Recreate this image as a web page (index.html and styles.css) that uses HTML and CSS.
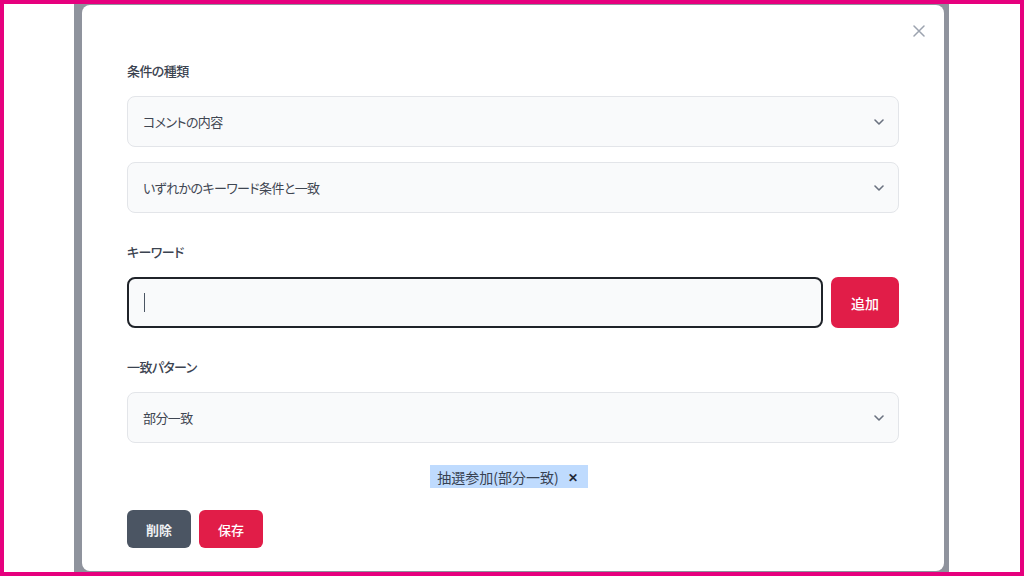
FILE: index.html
```html
<!DOCTYPE html>
<html lang="ja">
<head>
<meta charset="utf-8">
<title>条件の編集</title>
<link rel="stylesheet" href="styles.css">
</head>
<body>
<div class="frame">
  <div class="side"></div>
  <div class="backdrop">
    <div class="modal">
      <button class="close" aria-label="閉じる">
        <svg width="12" height="12" viewBox="0 0 12 12"><path d="M1 1L11 11M11 1L1 11" fill="none" stroke="#9ca3af" stroke-width="1.5" stroke-linecap="round"/></svg>
      </button>

      <div class="group">
        <div class="label">条件の種類</div>
        <div class="select">
          <span>コメントの内容</span>
          <svg class="chev" width="10" height="6" viewBox="0 0 10 6"><path d="M1 1L5 5L9 1" fill="none" stroke="#6b7280" stroke-width="1.6" stroke-linecap="round" stroke-linejoin="round"/></svg>
        </div>
        <div class="select second">
          <span>いずれかのキーワード条件と一致</span>
          <svg class="chev" width="10" height="6" viewBox="0 0 10 6"><path d="M1 1L5 5L9 1" fill="none" stroke="#6b7280" stroke-width="1.6" stroke-linecap="round" stroke-linejoin="round"/></svg>
        </div>
      </div>

      <div class="group">
        <div class="label">キーワード</div>
        <div class="input-row">
          <div class="input"><span class="caret"></span></div>
          <button class="btn btn-primary btn-add">追加</button>
        </div>
      </div>

      <div class="group">
        <div class="label">一致パターン</div>
        <div class="select">
          <span>部分一致</span>
          <svg class="chev" width="10" height="6" viewBox="0 0 10 6"><path d="M1 1L5 5L9 1" fill="none" stroke="#6b7280" stroke-width="1.6" stroke-linecap="round" stroke-linejoin="round"/></svg>
        </div>
      </div>

      <div class="tags">
        <span class="tag">抽選参加(部分一致)<span class="tag-x">✕</span></span>
      </div>

      <div class="actions">
        <button class="btn btn-dark">削除</button>
        <button class="btn btn-primary">保存</button>
      </div>
    </div>
  </div>
  <div class="side"></div>
</div>
</body>
</html>
```

FILE: styles.css
```css
* { box-sizing: border-box; }
html, body { margin: 0; padding: 0; background: #fff; }
body {
  font-family: "Noto Sans CJK JP", "Noto Sans", sans-serif;
  font-feature-settings: "palt";
  color: #374151;
}
.frame {
  width: 1024px;
  height: 576px;
  border: 4px solid #e6007e;
  display: flex;
  background: #fff;
  overflow: hidden;
}
.side { width: 70px; flex: none; background: #fff; }
.backdrop {
  width: 875px;
  flex: none;
  background: #8f939d;
  padding: 1px 5px 1px 8px;
  display: flex;
}
.modal {
  position: relative;
  flex: 1;
  background: #fff;
  border-radius: 8px;
  padding: 56px 45px 0;
}
.close {
  position: absolute;
  top: 20px;
  right: 19px;
  width: 12px;
  height: 12px;
  padding: 0;
  border: 0;
  background: none;
  display: flex;
}
.group { margin-bottom: 29px; }
.label {
  font-size: 13px;
  line-height: 20px;
  font-weight: 500;
  color: #3b4350;
  letter-spacing: -0.6px;
  margin-bottom: 15px;
}
.select {
  height: 51px;
  border: 1px solid #e3e5e9;
  border-radius: 8px;
  background: #f9fafb;
  display: flex;
  align-items: center;
  justify-content: space-between;
  padding: 0 14px 0 15px;
  font-size: 13px;
  letter-spacing: -0.6px;
  color: #3f4652;
}
.select.second { margin-top: 15px; }
.chev { display: block; }
.input-row { display: flex; gap: 8px; }
.input {
  flex: 1;
  height: 51px;
  border: 2px solid #1f2329;
  border-radius: 8px;
  background: #f9fafb;
  display: flex;
  align-items: center;
  padding-left: 15px;
}
.caret {
  width: 1px;
  height: 19px;
  background: #4b5563;
}
.btn {
  border: 0;
  font-family: inherit;
  font-feature-settings: "palt";
  color: #fff;
  cursor: pointer;
  border-radius: 6px;
}
.btn-primary { background: #e11d48; }
.btn-dark { background: #4b5563; color: #eef0f3; font-weight: 700; }
.btn-add {
  width: 68px;
  height: 51px;
  font-size: 14px;
  font-weight: 500;
  border-radius: 7px;
}
.tags {
  margin-top: -7px;
  display: flex;
  justify-content: center;
  padding-right: 8px;
}
.tag {
  background: #bfdbfe;
  height: 23px;
  display: inline-flex;
  align-items: center;
  padding: 0 10px 0 7px;
  font-size: 14px;
  color: #374151;
}
.tag-x {
  margin-left: 9px;
  font-size: 12px;
  font-weight: 700;
  color: #1f2937;
}
.actions {
  margin-top: 22px;
  display: flex;
  gap: 8px;
}
.actions .btn {
  width: 64px;
  height: 38px;
  font-size: 13px;
  font-weight: 700;
}
.actions .btn-primary { font-weight: 500; }
```
